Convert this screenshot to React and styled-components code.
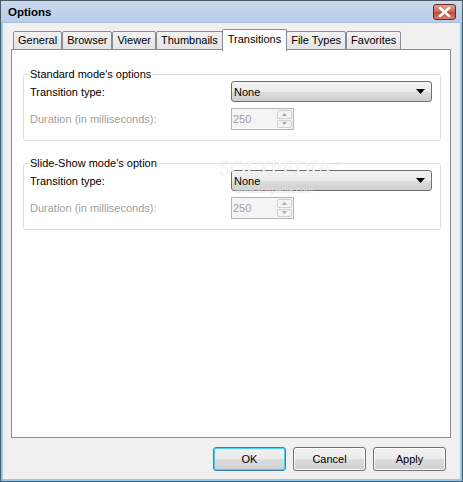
import React from 'react'
import styled, { createGlobalStyle } from 'styled-components'

const GlobalStyle = createGlobalStyle`
  html, body {
    margin: 0;
    padding: 0;
    background: #ffffff;
  }
  body {
    font-family: "Liberation Sans", Arial, sans-serif;
    font-size: 11px;
    color: #000;
  }
`

const tabs = ['General', 'Browser', 'Viewer', 'Thumbnails', 'Transitions', 'File Types', 'Favorites']

const groups = [
  { title: "Standard mode's options" },
  { title: "Slide-Show mode's option" },
]

const App = () => {
  return (
    <>
      <GlobalStyle />
      <Window>
        <TitleBar>
          <Title>Options</Title>
          <CloseButton>
            <svg width="13" height="10" viewBox="0 0 13 10">
              <path d="M2 1 L11 9 M11 1 L2 9" stroke="#fff" strokeWidth="2.6" strokeLinecap="square" />
            </svg>
          </CloseButton>
        </TitleBar>
        <Body>
          <TabStrip>
            {tabs.map(t => (
              <Tab key={t} active={t === 'Transitions'}>{t}</Tab>
            ))}
          </TabStrip>
          <Pane>
            {groups.map(g => (
              <GroupBox key={g.title}>
                <Legend>{g.title}</Legend>
                <Row>
                  <Label>Transition type:</Label>
                  <Combo>
                    <span>None</span>
                    <svg width="9" height="5" viewBox="0 0 9 5">
                      <path d="M0 0 H9 L4.5 5 Z" fill="#000" />
                    </svg>
                  </Combo>
                </Row>
                <Row>
                  <Label disabled>Duration (in milliseconds):</Label>
                  <Spin>
                    <SpinValue>250</SpinValue>
                    <SpinButtons>
                      <SpinArrow>
                        <svg width="5" height="3" viewBox="0 0 5 3"><path d="M0 3 L2.5 0 L5 3 Z" fill="#a8a8a8" /></svg>
                      </SpinArrow>
                      <SpinArrow>
                        <svg width="5" height="3" viewBox="0 0 5 3"><path d="M0 0 L5 0 L2.5 3 Z" fill="#a8a8a8" /></svg>
                      </SpinArrow>
                    </SpinButtons>
                  </Spin>
                </Row>
              </GroupBox>
            ))}
            <Watermark>
              <span>SOFTPEDIA<sup>™</sup></span>
              <small>www.softpedia.com</small>
            </Watermark>
          </Pane>
          <ButtonRow>
            <Button focused>OK</Button>
            <Button>Cancel</Button>
            <Button>Apply</Button>
          </ButtonRow>
        </Body>
      </Window>
    </>
  )
}

const Window = styled.div`
  width: 463px;
  height: 482px;
  box-sizing: border-box;
  display: flex;
  flex-direction: column;
  border: 1px solid #4d5966;
  background: #f0f0f0;
  box-shadow: inset 0 0 0 2px #8fc9ec;
`

const TitleBar = styled.div`
  height: 21px;
  display: flex;
  align-items: center;
  justify-content: space-between;
  padding: 0 6px 0 7px;
  background: linear-gradient(#c9d9ee, #b7cde8);
  border-bottom: 1px solid #a9bed8;
`

const Title = styled.div`
  font-weight: bold;
  font-size: 11.5px;
  color: #000;
`

const CloseButton = styled.div`
  width: 21px;
  height: 14px;
  display: flex;
  align-items: center;
  justify-content: center;
  border: 1px solid #6b2620;
  border-radius: 3px;
  background: linear-gradient(#e0a396 0%, #cc6453 50%, #c04a38 51%, #d7806d 100%);
`

const Body = styled.div`
  flex: 1;
  display: flex;
  flex-direction: column;
  padding: 5px 9px 8px 8px;
  margin: 0 2px 2px 2px;
`

const TabStrip = styled.div`
  display: flex;
  align-items: flex-end;
  padding-left: 2px;
  height: 22px;
  position: relative;
  z-index: 1;
`

const Tab = styled.div`
  box-sizing: border-box;
  height: ${p => (p.active ? '22px' : '19px')};
  padding: ${p => (p.active ? '3px 5px 0' : '2px 4px 0')};
  margin: ${p => (p.active ? '0 -1px -1px -1px' : '0')};
  border: 1px solid #898c95;
  border-bottom: ${p => (p.active ? 'none' : '1px solid #898c95')};
  border-radius: 2px 2px 0 0;
  background: ${p => (p.active ? '#ffffff' : 'linear-gradient(#f2f2f2, #e3e3e3)')};
  white-space: nowrap;
  position: relative;
  z-index: ${p => (p.active ? 2 : 1)};
`

const Pane = styled.div`
  height: 389px;
  box-sizing: border-box;
  margin-top: -1px;
  border: 1px solid #898c95;
  background: #ffffff;
  padding: 24px 9px 0 11px;
  display: flex;
  flex-direction: column;
  gap: 22px;
  position: relative;
`

const GroupBox = styled.div`
  box-sizing: border-box;
  height: 67px;
  border: 1px solid #d5dfe5;
  border-radius: 3px;
  position: relative;
  padding: 6px 8px 0 6px;
  display: flex;
  flex-direction: column;
  gap: 6px;
`

const Legend = styled.div`
  position: absolute;
  top: -7px;
  left: 5px;
  padding: 0 1px;
  background: #ffffff;
  line-height: 13px;
`

const Row = styled.div`
  display: flex;
  align-items: center;
  justify-content: space-between;
`

const Label = styled.div`
  color: ${p => (p.disabled ? '#a0a0a0' : '#000')};
`

const Combo = styled.div`
  box-sizing: border-box;
  width: 201px;
  height: 21px;
  display: flex;
  align-items: center;
  justify-content: space-between;
  padding: 0 6px 0 2px;
  border: 1px solid #707070;
  border-radius: 3px;
  background: linear-gradient(#f2f2f2 0%, #ebebeb 50%, #dddddd 51%, #cfcfcf 100%);
`

const Spin = styled.div`
  box-sizing: border-box;
  width: 63px;
  height: 22px;
  margin-right: 138px;
  display: flex;
  align-items: stretch;
  border: 1px solid #b5b5b5;
  background: #f4f4f4;
  padding: 1px;
`

const SpinValue = styled.div`
  flex: 1;
  display: flex;
  align-items: center;
  color: #a0a0a0;
`

const SpinButtons = styled.div`
  width: 15px;
  display: flex;
  flex-direction: column;
  gap: 1px;
`

const SpinArrow = styled.div`
  flex: 1;
  display: flex;
  align-items: center;
  justify-content: center;
  border: 1px solid #d0d0d0;
  border-radius: 2px;
  background: #f4f4f4;
`

const Watermark = styled.div`
  position: absolute;
  left: 207px;
  top: 104px;
  display: flex;
  flex-direction: column;
  align-items: center;
  pointer-events: none;
  span {
    font-family: "Liberation Serif", serif;
    font-size: 21px;
    line-height: 22px;
    color: rgba(255, 255, 255, 0.9);
    text-shadow: 0 0 1px rgba(170, 170, 170, 0.55);
  }
  sup {
    font-family: "Liberation Sans", sans-serif;
    font-size: 7px;
    color: #e4e4e4;
    text-shadow: none;
    margin-left: 2px;
  }
  small {
    margin-top: 6px;
    margin-left: -12px;
    font-size: 9px;
    color: rgba(240, 240, 240, 0.7);
    text-shadow: 0 0 1px rgba(180, 180, 180, 0.45);
  }
`

const ButtonRow = styled.div`
  display: flex;
  justify-content: flex-end;
  gap: 7px;
  padding-top: 9px;
  padding-right: 5px;
`

const Button = styled.div`
  box-sizing: border-box;
  width: 73px;
  height: 24px;
  display: flex;
  align-items: center;
  justify-content: center;
  border: 1px solid ${p => (p.focused ? '#3c7fb1' : '#707070')};
  border-radius: 3px;
  background: linear-gradient(#f2f2f2 0%, #ebebeb 50%, #dddddd 51%, #cfcfcf 100%);
  box-shadow: ${p => (p.focused ? 'inset 0 0 0 1px #48d0f8' : 'inset 0 0 0 1px #fcfcfc')};
`

export default App
